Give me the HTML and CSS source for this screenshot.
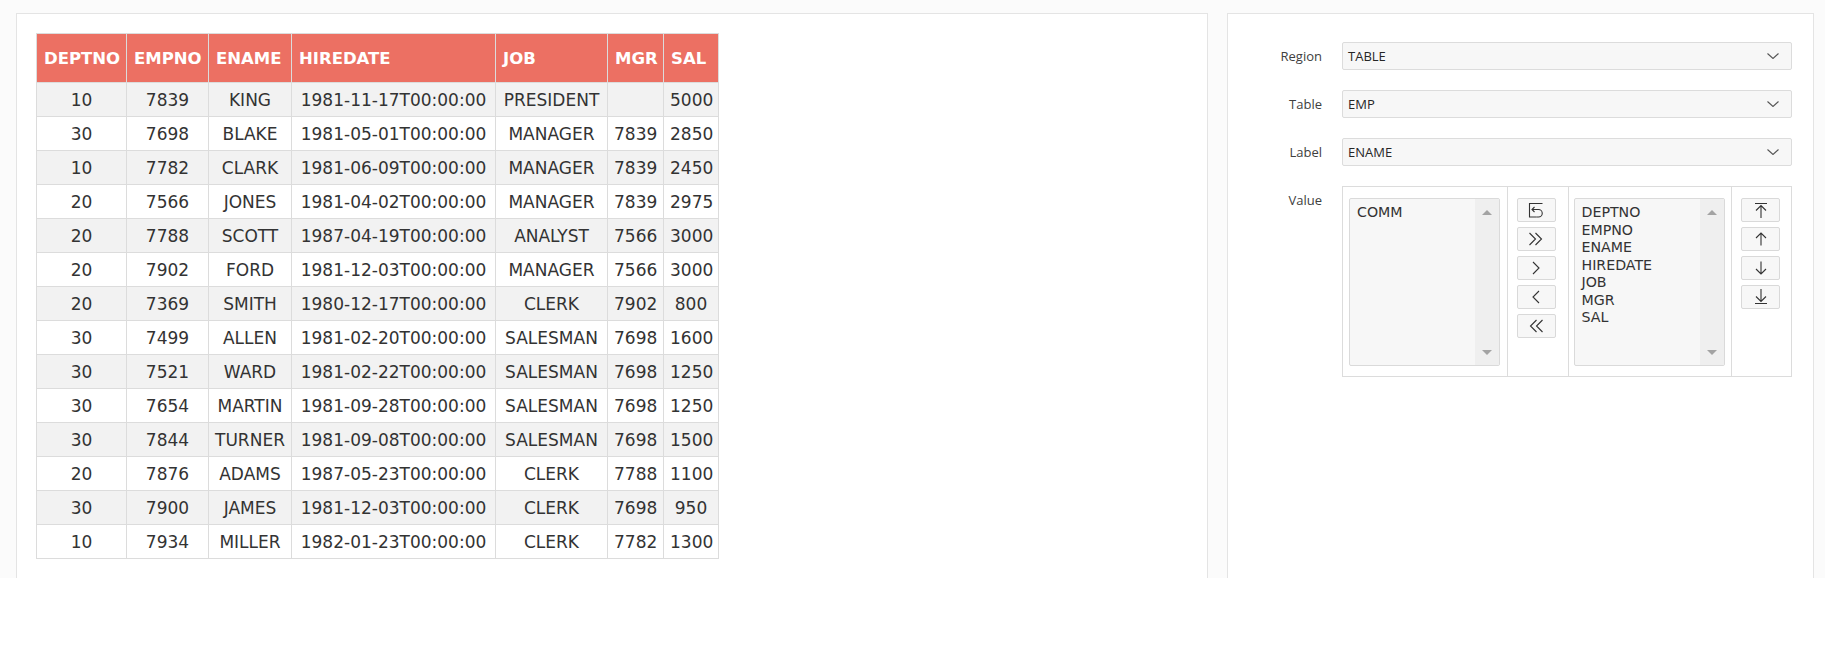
FILE: index.html
```html
<!DOCTYPE html>
<html lang="en">
<head>
<meta charset="utf-8">
<title>EMP</title>
<link rel="stylesheet" href="styles.css">
</head>
<body>
<div class="page">
  <section class="panel panel-report">
    <table class="emp">
      <colgroup>
        <col class="c-deptno"><col class="c-empno"><col class="c-ename"><col class="c-hire"><col class="c-job"><col class="c-mgr"><col class="c-sal">
      </colgroup>
      <thead>
        <tr><th>DEPTNO</th><th>EMPNO</th><th>ENAME</th><th>HIREDATE</th><th>JOB</th><th>MGR</th><th>SAL</th></tr>
      </thead>
      <tbody>
        <tr><td>10</td><td>7839</td><td>KING</td><td>1981-11-17T00:00:00</td><td>PRESIDENT</td><td></td><td>5000</td></tr>
        <tr><td>30</td><td>7698</td><td>BLAKE</td><td>1981-05-01T00:00:00</td><td>MANAGER</td><td>7839</td><td>2850</td></tr>
        <tr><td>10</td><td>7782</td><td>CLARK</td><td>1981-06-09T00:00:00</td><td>MANAGER</td><td>7839</td><td>2450</td></tr>
        <tr><td>20</td><td>7566</td><td>JONES</td><td>1981-04-02T00:00:00</td><td>MANAGER</td><td>7839</td><td>2975</td></tr>
        <tr><td>20</td><td>7788</td><td>SCOTT</td><td>1987-04-19T00:00:00</td><td>ANALYST</td><td>7566</td><td>3000</td></tr>
        <tr><td>20</td><td>7902</td><td>FORD</td><td>1981-12-03T00:00:00</td><td>MANAGER</td><td>7566</td><td>3000</td></tr>
        <tr><td>20</td><td>7369</td><td>SMITH</td><td>1980-12-17T00:00:00</td><td>CLERK</td><td>7902</td><td>800</td></tr>
        <tr><td>30</td><td>7499</td><td>ALLEN</td><td>1981-02-20T00:00:00</td><td>SALESMAN</td><td>7698</td><td>1600</td></tr>
        <tr><td>30</td><td>7521</td><td>WARD</td><td>1981-02-22T00:00:00</td><td>SALESMAN</td><td>7698</td><td>1250</td></tr>
        <tr><td>30</td><td>7654</td><td>MARTIN</td><td>1981-09-28T00:00:00</td><td>SALESMAN</td><td>7698</td><td>1250</td></tr>
        <tr><td>30</td><td>7844</td><td>TURNER</td><td>1981-09-08T00:00:00</td><td>SALESMAN</td><td>7698</td><td>1500</td></tr>
        <tr><td>20</td><td>7876</td><td>ADAMS</td><td>1987-05-23T00:00:00</td><td>CLERK</td><td>7788</td><td>1100</td></tr>
        <tr><td>30</td><td>7900</td><td>JAMES</td><td>1981-12-03T00:00:00</td><td>CLERK</td><td>7698</td><td>950</td></tr>
        <tr><td>10</td><td>7934</td><td>MILLER</td><td>1982-01-23T00:00:00</td><td>CLERK</td><td>7782</td><td>1300</td></tr>
      </tbody>
    </table>
  </section>

  <section class="panel panel-form">
    <div class="form">
      <label class="f-label">Region</label>
      <div class="select"><span>TABLE</span><svg class="chev" viewBox="0 0 12 6" width="12" height="6"><polyline points="0.5,0.5 6,5.5 11.5,0.5"/></svg></div>

      <label class="f-label">Table</label>
      <div class="select"><span>EMP</span><svg class="chev" viewBox="0 0 12 6" width="12" height="6"><polyline points="0.5,0.5 6,5.5 11.5,0.5"/></svg></div>

      <label class="f-label">Label</label>
      <div class="select"><span>ENAME</span><svg class="chev" viewBox="0 0 12 6" width="12" height="6"><polyline points="0.5,0.5 6,5.5 11.5,0.5"/></svg></div>

      <label class="f-label">Value</label>
      <div class="shuttle">
        <div class="sh-cell sh-list-cell sh-left">
          <div class="listbox">
            <div class="items"><div>COMM</div></div>
            <div class="track"><span class="tri up"></span><span class="tri down"></span></div>
          </div>
        </div>
        <div class="sh-cell sh-btns">
          <button class="btn" type="button"><svg viewBox="0 0 18 18" width="18" height="18"><path d="M15.5 2.5H2.5V16H9.5"/><path d="M7.5 6L5 8.5L7.5 11M5 8.5H11.5A3.75 3.75 0 0 1 11.5 16H9.5"/></svg></button>
          <button class="btn" type="button"><svg viewBox="0 0 18 18" width="18" height="18"><polyline points="2.5,3 8.5,9 2.5,15"/><polyline points="8.5,3 14.5,9 8.5,15"/></svg></button>
          <button class="btn" type="button"><svg viewBox="0 0 18 18" width="18" height="18"><polyline points="6,3 12,9 6,15"/></svg></button>
          <button class="btn" type="button"><svg viewBox="0 0 18 18" width="18" height="18"><polyline points="12,3 6,9 12,15"/></svg></button>
          <button class="btn" type="button"><svg viewBox="0 0 18 18" width="18" height="18"><polyline points="9.5,3 3.5,9 9.5,15"/><polyline points="15.5,3 9.5,9 15.5,15"/></svg></button>
        </div>
        <div class="sh-cell sh-list-cell sh-right">
          <div class="listbox">
            <div class="items">
              <div>DEPTNO</div><div>EMPNO</div><div>ENAME</div><div>HIREDATE</div><div>JOB</div><div>MGR</div><div>SAL</div>
            </div>
            <div class="track"><span class="tri up"></span><span class="tri down"></span></div>
          </div>
        </div>
        <div class="sh-cell sh-btns sh-last">
          <button class="btn" type="button"><svg viewBox="0 0 18 18" width="18" height="18"><path d="M3 2.5H15M9 4.5V17M4 9.5L9 4.5L14 9.5"/></svg></button>
          <button class="btn" type="button"><svg viewBox="0 0 18 18" width="18" height="18"><path d="M9 3V15.5M4 8L9 3L14 8"/></svg></button>
          <button class="btn" type="button"><svg viewBox="0 0 18 18" width="18" height="18"><path d="M9 2.5V15M4 10L9 15L14 10"/></svg></button>
          <button class="btn" type="button"><svg viewBox="0 0 18 18" width="18" height="18"><path d="M9 1V13.5M4 8.5L9 13.5L14 8.5M3 15.5H15"/></svg></button>
        </div>
      </div>
    </div>
  </section>
</div>
</body>
</html>
```

FILE: styles.css
```css
html, body {
  margin: 0;
  padding: 0;
  background: #ffffff;
}

.page {
  box-sizing: border-box;
  height: 578px;
  overflow: hidden;
  background: #fbfbfb;
  padding: 13px 11px 0 16px;
  display: grid;
  grid-template-columns: 1192px 587px;
  column-gap: 19px;
  align-items: stretch;
}

.panel {
  box-sizing: border-box;
  background: #ffffff;
  border: 1px solid #e4e4e4;
  border-bottom: none;
}

.panel-report {
  padding: 19px 19px 19px 19px;
}

/* ---------- table ---------- */
.emp {
  border-collapse: collapse;
  table-layout: fixed;
  width: 682px;
  font-family: "DejaVu Sans", Verdana, sans-serif;
  color: #333333;
}

.c-deptno { width: 90px; }
.c-empno { width: 82px; }
.c-ename { width: 83px; }
.c-hire { width: 204px; }
.c-job { width: 112px; }
.c-mgr { width: 56px; }
.c-sal { width: 55px; }

.emp th {
  background: #ec7063;
  color: #ffffff;
  font-weight: bold;
  font-size: 16.5px;
  text-align: left;
  height: 48px;
  padding: 0 7px;
  border: 1px solid #dcdcdc;
  white-space: nowrap;
}

.emp td {
  font-size: 17px;
  text-align: center;
  height: 33px;
  padding: 0 6px;
  border: 1px solid #dcdcdc;
  white-space: nowrap;
}

.emp tbody tr:nth-child(odd) td {
  background: #f2f2f2;
}

.emp tbody tr:nth-child(even) td {
  background: #ffffff;
}

/* ---------- form ---------- */
.panel-form {
  padding: 28px 20px 20px 20px;
}

.form {
  display: grid;
  grid-template-columns: 74px 450px;
  column-gap: 20px;
  row-gap: 20px;
  font-family: "Open Sans", "Noto Sans", sans-serif;
  font-size: 13px;
}

.f-label {
  text-align: right;
  line-height: 28px;
  color: #404040;
}

.select {
  box-sizing: border-box;
  height: 28px;
  border: 1px solid #dcdcdc;
  border-radius: 2px;
  background: #f7f7f7;
  display: flex;
  align-items: center;
  justify-content: space-between;
  padding: 0 12px 0 5px;
  color: #262626;
}

.chev {
  fill: none;
  stroke: #555555;
  stroke-width: 1.1;
}

/* ---------- shuttle ---------- */
.shuttle {
  box-sizing: border-box;
  height: 191px;
  border: 1px solid #dcdcdc;
  display: flex;
}

.sh-cell {
  box-sizing: border-box;
  border-right: 1px solid #dcdcdc;
  padding-top: 11px;
}

.sh-left {
  width: 165px;
  padding-left: 6px;
}

.sh-right {
  width: 164px;
  padding-left: 5px;
}

.sh-btns {
  width: 61px;
  padding-left: 9px;
  display: flex;
  flex-direction: column;
  gap: 5px;
}

.sh-last {
  width: 59px;
  border-right: none;
}

.listbox {
  box-sizing: border-box;
  width: 151px;
  height: 168px;
  border: 1px solid #dadada;
  border-radius: 2px;
  background: #f7f7f7;
  display: flex;
  overflow: hidden;
}

.items {
  flex: 1;
  padding: 5px 7px;
  font-family: "DejaVu Sans", Verdana, sans-serif;
  font-size: 14.2px;
  line-height: 17.5px;
  color: #333333;
}

.track {
  width: 24px;
  background: #efefef;
  display: flex;
  flex-direction: column;
  justify-content: space-between;
  align-items: center;
  padding: 11px 0 10px;
}

.tri {
  width: 0;
  height: 0;
  border-left: 5.5px solid transparent;
  border-right: 5.5px solid transparent;
}

.tri.up {
  border-bottom: 5px solid #a3a3a3;
}

.tri.down {
  border-top: 5px solid #a3a3a3;
}

.btn {
  box-sizing: border-box;
  width: 39px;
  height: 24px;
  padding: 0;
  margin: 0;
  border: 1px solid #d9d9d9;
  border-radius: 2px;
  background: #f7f7f7;
  display: flex;
  align-items: center;
  justify-content: center;
}

.btn svg {
  fill: none;
  stroke: #333333;
  stroke-width: 1.1;
}
```
